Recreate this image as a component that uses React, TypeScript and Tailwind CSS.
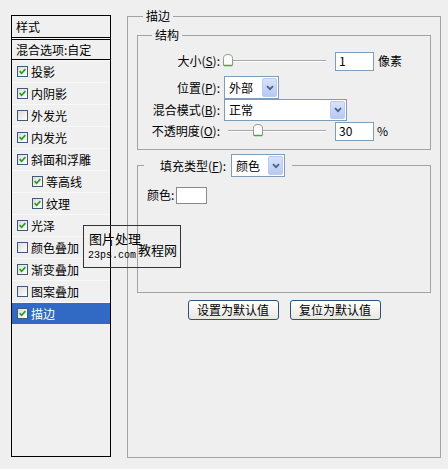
import React from "react";

function Check({ checked }: { checked: boolean }) {
  return (
    <span className="w-[11px] h-[11px] shrink-0 border border-[#3d5b78] bg-linear-to-br from-[#dedcd5] to-white flex items-center justify-center">
      {checked && (
        <svg width="7" height="7" viewBox="0 0 7 7">
          <path d="M0.6 3.2 L2.6 5.3 L6.4 1.2" stroke="#21a121" strokeWidth="1.7" fill="none" />
        </svg>
      )}
    </span>
  );
}

function Item({
  label,
  checked,
  indent,
  selected,
}: {
  label: string;
  checked: boolean;
  indent?: boolean;
  selected?: boolean;
}) {
  return (
    <div
      className={`h-[22px] flex items-center border-t border-[#f8f8f8] ${indent ? "pl-[20px]" : "pl-[5px]"} ${
        selected ? "bg-[#316ac5] text-white border-[#316ac5]" : ""
      }`}
    >
      <Check checked={checked} />
      <span className="ml-[3px] leading-none">{label}</span>
    </div>
  );
}

function Thumb() {
  return (
    <svg width="10" height="13" viewBox="0 0 10 13">
      <path d="M0.5 4.5 Q0.5 0.5 5 0.5 Q9.5 0.5 9.5 4.5 L9.5 11.5 L0.5 11.5 Z" fill="#fbfbf8" stroke="#8f9a8f" />
      <path d="M1 11.5 L9 11.5" stroke="#3fae3f" strokeWidth="1.5" />
    </svg>
  );
}

function Slider({ pos }: { pos: number }) {
  return (
    <div className="relative w-[102px] h-[20px] flex items-center">
      <div className="ml-[4px] w-[98px] h-[2px] border-t border-[#a7a7a7] border-b border-b-white" />
      <div className="absolute top-[3px]" style={{ left: pos }}>
        <Thumb />
      </div>
    </div>
  );
}

function Chevron() {
  return (
    <svg width="8" height="6" viewBox="0 0 8 6">
      <path d="M1 1.2 L4 4.2 L7 1.2" stroke="#4d6185" strokeWidth="1.8" fill="none" />
    </svg>
  );
}

function Select({ value, w, h }: { value: string; w: string; h: string }) {
  return (
    <div className={`${w} ${h} border border-[#7f9db9] bg-white flex items-stretch`}>
      <span className="flex-1 pl-[4px] flex items-center">{value}</span>
      <span className="w-[15px] my-[1px] mr-[1px] rounded-[2px] bg-linear-to-b from-[#d7e3fb] to-[#b6c9f3] border border-[#b9cbf2] flex items-center justify-center">
        <Chevron />
      </span>
    </div>
  );
}

function Input({ value }: { value: string }) {
  return (
    <div className="w-[39px] h-[19px] border border-[#7f9db9] bg-white pl-[3px] flex items-center">{value}</div>
  );
}

function Btn({ label }: { label: string }) {
  return (
    <div className="w-[91px] h-[20px] rounded-[3px] border border-[#2c4f7c] bg-linear-to-b from-white to-[#e8e7e0] flex items-center justify-center">
      {label}
    </div>
  );
}

export default function App() {
  return (
    <div className="w-[448px] h-[469px] bg-[#efefef] relative overflow-hidden font-['Noto_Sans_CJK_SC','Noto_Sans',sans-serif] text-[12px] text-black flex pl-[11px] pt-[9px]">
      {/* left list */}
      <div className="mt-[6px] w-[100px] h-[442px] border border-black bg-[#f0f0f0] flex flex-col">
        <div className="h-[22px] pl-[4px] flex items-center border-b border-black">样式</div>
        <div className="h-[1px] bg-[#f6f6f6]" />
        <div className="h-[21px] pl-[4px] flex items-center border-t border-black border-b">混合选项:自定</div>
        <Item label="投影" checked />
        <Item label="内阴影" checked />
        <Item label="外发光" checked={false} />
        <Item label="内发光" checked />
        <Item label="斜面和浮雕" checked />
        <Item label="等高线" checked indent />
        <Item label="纹理" checked indent />
        <Item label="光泽" checked />
        <Item label="颜色叠加" checked={false} />
        <Item label="渐变叠加" checked />
        <Item label="图案叠加" checked={false} />
        <Item label="描边" checked selected />
      </div>

      {/* right panel */}
      <fieldset className="ml-[16px] w-[314px] h-[449px] border border-[#a3a3a3] px-[9px]">
        <legend className="ml-[6px] px-[3px] leading-[14px]">描边</legend>

        <fieldset className="mt-[5px] w-[294px] border border-[#a3a3a3] pb-[8px]">
          <legend className="ml-[14px] px-[3px] leading-[14px]">结构</legend>
          <div className="pt-[9px] flex flex-col">
            <div className="h-[20px] flex items-center">
              <span className="w-[82px] text-right">
                大小(<u>S</u>):
              </span>
              <span className="ml-[4px]">
                <Slider pos={-1} />
              </span>
              <span className="ml-[9px]">
                <Input value="1" />
              </span>
              <span className="ml-[4px]">像素</span>
            </div>
            <div className="mt-[5px] h-[23px] flex items-center">
              <span className="w-[82px] text-right">
                位置(<u>P</u>):
              </span>
              <span className="ml-[4px]">
                <Select value="外部" w="w-[55px]" h="h-[23px]" />
              </span>
            </div>
            <div className="h-[22px] flex items-center">
              <span className="w-[82px] text-right">
                混合模式(<u>B</u>):
              </span>
              <span className="ml-[4px]">
                <Select value="正常" w="w-[123px]" h="h-[22px]" />
              </span>
            </div>
            <div className="h-[20px] flex items-center">
              <span className="w-[82px] text-right">
                不透明度(<u>O</u>):
              </span>
              <span className="ml-[4px]">
                <Slider pos={29} />
              </span>
              <span className="ml-[9px]">
                <Input value="30" />
              </span>
              <span className="ml-[3px]">%</span>
            </div>
          </div>
        </fieldset>

        <fieldset className="mt-[4px] w-[294px] border border-[#a3a3a3]">
          <legend className="ml-[6px] pl-[16px] pr-[7px]">
            <div className="flex items-center">
              <span>
                填充类型(<u>F</u>):
              </span>
              <span className="ml-[5px]">
                <Select value="颜色" w="w-[54px]" h="h-[23px]" />
              </span>
            </div>
          </legend>
          <div className="h-[115px] pl-[9px] pt-[10px]">
            <div className="flex items-center h-[16px]">
              <span>颜色:</span>
              <span className="ml-[2px] w-[31px] h-[17px] border border-[#8a8a8a] bg-white" />
            </div>
          </div>
        </fieldset>

        <div className="mt-[7px] w-[294px] flex justify-center gap-[11px]">
          <Btn label="设置为默认值" />
          <Btn label="复位为默认值" />
        </div>
      </fieldset>

      {/* watermark overlay */}
      <div className="absolute left-[83px] top-[225px] w-[98px] h-[43px] border border-[#333]">
        <div className="absolute left-[5px] top-[6px] text-[13px] leading-[14px] font-['Noto_Sans_CJK_SC',sans-serif]">
          图片处理
        </div>
        <div className="absolute left-[4px] top-[24px] text-[10px] leading-[11px] font-['Liberation_Mono',monospace]">
          23ps.com
        </div>
        <div className="absolute left-[54px] top-[17px] text-[13px] leading-[14px]">教程网</div>
      </div>
    </div>
  );
}
